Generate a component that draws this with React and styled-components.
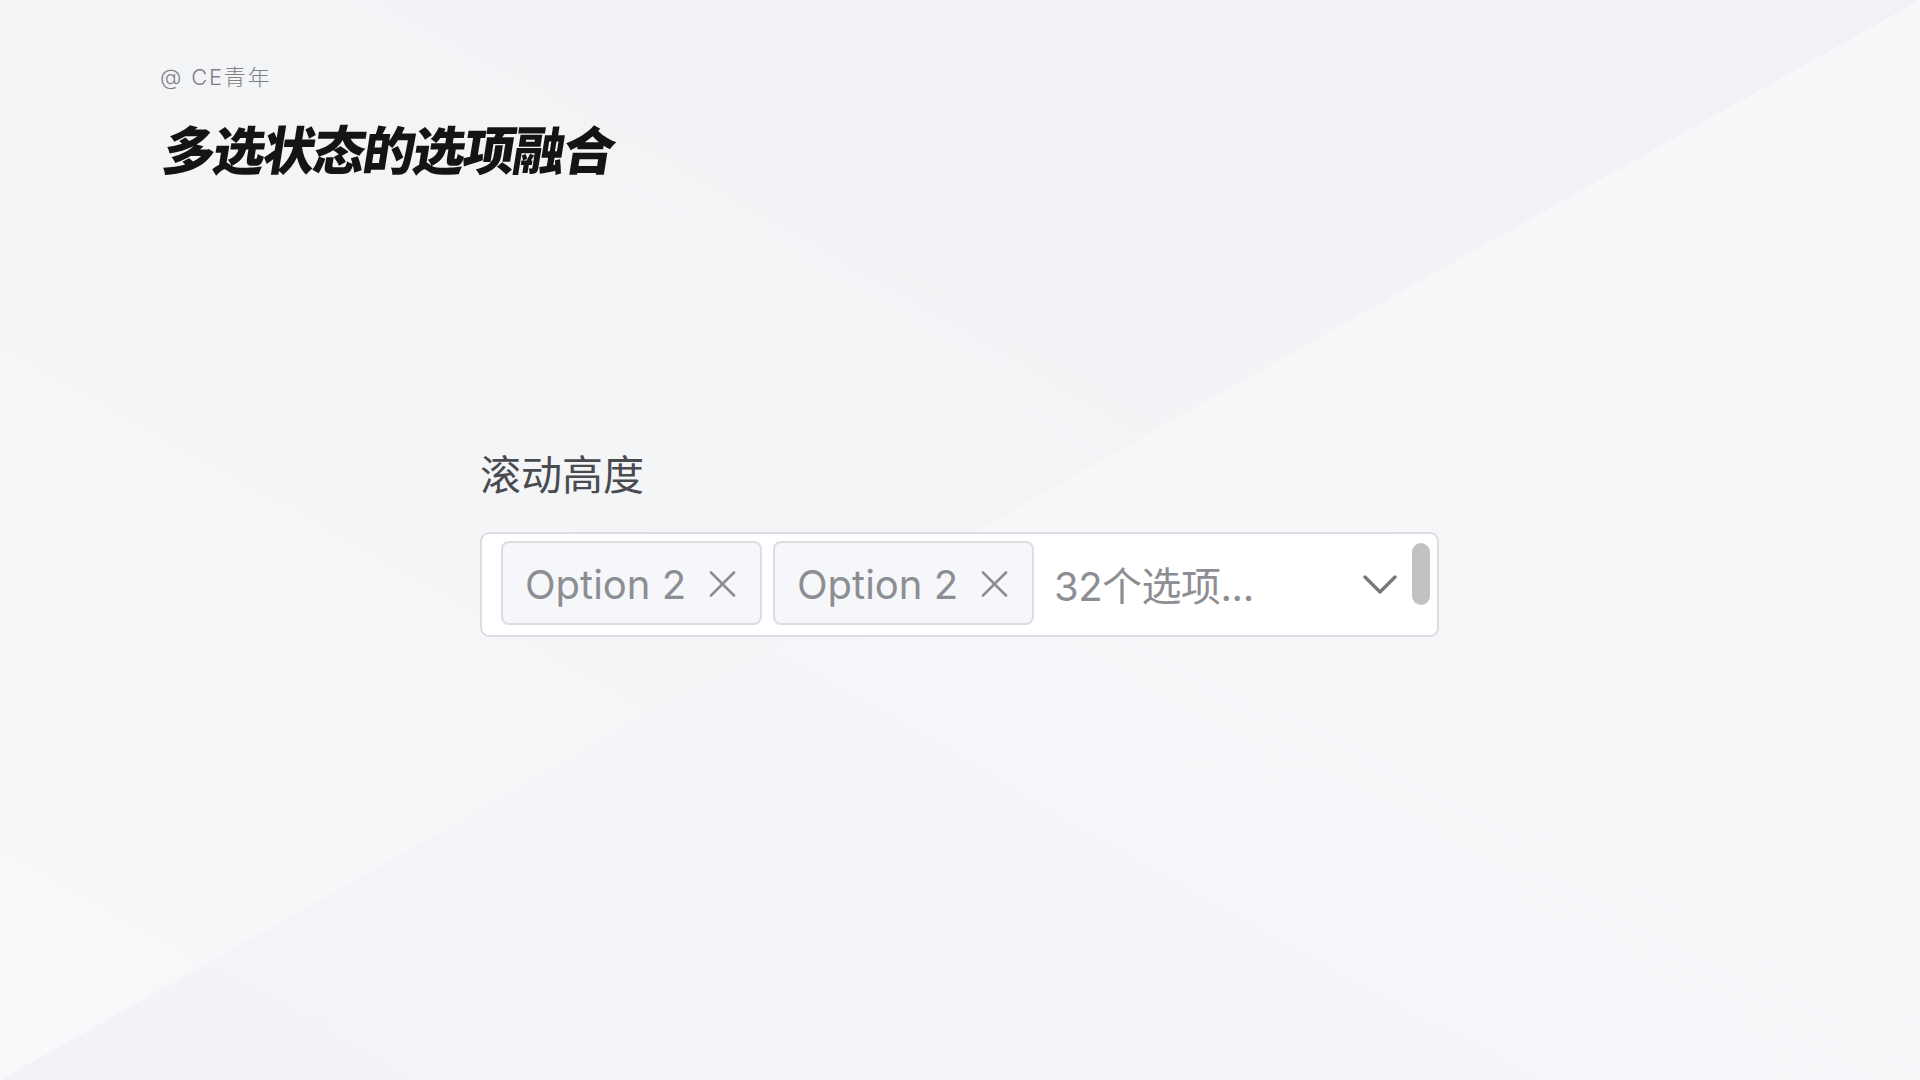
import React from "react";
import styled, { createGlobalStyle } from "styled-components";

const GlobalStyle = createGlobalStyle`
  html, body {
    margin: 0;
    padding: 0;
  }
  body {
    background: #f4f5f7;
    font-family: "Inter", "Noto Sans CJK SC", sans-serif;
  }
`;

// the backdrop is split by a diagonal from the bottom-left to the top-right corner
const Page = styled.div`
  position: relative;
  min-height: 100vh;
  box-sizing: border-box;
  padding: 66px 0 0 160px;
  background: linear-gradient(to bottom left, #f1f2f5 0%, #f3f4f6 45%, #f8f9fb 100%);
  overflow: hidden;

  &::before {
    content: "";
    position: absolute;
    inset: 0;
    clip-path: polygon(100% 0, 100% 100%, 0 100%);
    background: linear-gradient(to bottom left, #f8f8fa 0%, #f6f7f9 45%, #f2f3f6 100%);
  }
`;

const Content = styled.div`
  position: relative;
`;

const Credit = styled.div`
  font-family: "Inter", "Noto Sans CJK SC", sans-serif;
  font-size: 22px;
  font-weight: 300;
  letter-spacing: 1.8px;
  line-height: 1;
  color: #808186;
`;

const Title = styled.h1`
  display: inline-block;
  margin: 34px 0 0;
  font-family: "Noto Sans CJK SC", sans-serif;
  font-size: 52px;
  font-weight: 900;
  line-height: 1;
  letter-spacing: -2px;
  color: #141414;
  transform: skewX(-9deg);
  transform-origin: left bottom;
`;

const Field = styled.div`
  margin: 278px 0 0 320px;
  display: flex;
  flex-direction: column;
  gap: 39px;
`;

const Label = styled.div`
  font-family: "Noto Sans CJK SC", sans-serif;
  font-size: 41px;
  line-height: 1;
  color: #4a4b50;
`;

const SelectBox = styled.div`
  box-sizing: border-box;
  width: 959px;
  height: 105px;
  border: 2px solid #dcdde2;
  border-radius: 9px;
  background: #ffffff;
  display: flex;
  align-items: flex-start;
  padding: 7px 7px 0 19px;
`;

const Tag = styled.div`
  box-sizing: border-box;
  width: 261px;
  height: 84px;
  margin-right: ${(p) => p.gap || 0}px;
  border: 2px solid #dcdde3;
  border-radius: 8px;
  background: #f6f7fa;
  display: flex;
  align-items: center;
  justify-content: space-between;
  padding: 2px 24px 0 22px;
  font-size: 40px;
  color: #8d8e93;
`;

const Placeholder = styled.div`
  flex: 1;
  align-self: center;
  margin-left: 20px;
  margin-top: -8px;
  font-size: 40px;
  letter-spacing: -0.5px;
  color: #8d8e93;
  white-space: nowrap;
`;

const Chevron = styled.svg`
  align-self: center;
  margin-top: -6px;
  margin-right: 15px;
  flex-shrink: 0;
`;

const Thumb = styled.div`
  width: 18px;
  height: 62px;
  margin-top: 2px;
  border-radius: 9px;
  background: #c2c2c4;
  flex-shrink: 0;
`;

function CloseIcon() {
  return (
    <svg width="27" height="26" viewBox="0 0 27 26" fill="none">
      <path d="M2 1.5L25 24.5M25 1.5L2 24.5" stroke="#8d8e93" strokeWidth="2.6" strokeLinecap="round" />
    </svg>
  );
}

function OptionTag({ label, gap }) {
  return (
    <Tag gap={gap}>
      <span>{label}</span>
      <CloseIcon />
    </Tag>
  );
}

export default function App() {
  return (
    <>
      <GlobalStyle />
      <Page>
        <Content>
          <Credit>@ CE青年</Credit>
          <Title>多选状态的选项融合</Title>
          <Field>
            <Label>滚动高度</Label>
            <SelectBox>
              <OptionTag label="Option 2" gap={11} />
              <OptionTag label="Option 2" />
              <Placeholder>32个选项...</Placeholder>
              <Chevron width="34" height="20" viewBox="0 0 34 20" fill="none">
                <path d="M2 2L17 17L32 2" stroke="#76777c" strokeWidth="3.2" strokeLinecap="round" strokeLinejoin="round" />
              </Chevron>
              <Thumb />
            </SelectBox>
          </Field>
        </Content>
      </Page>
    </>
  );
}
